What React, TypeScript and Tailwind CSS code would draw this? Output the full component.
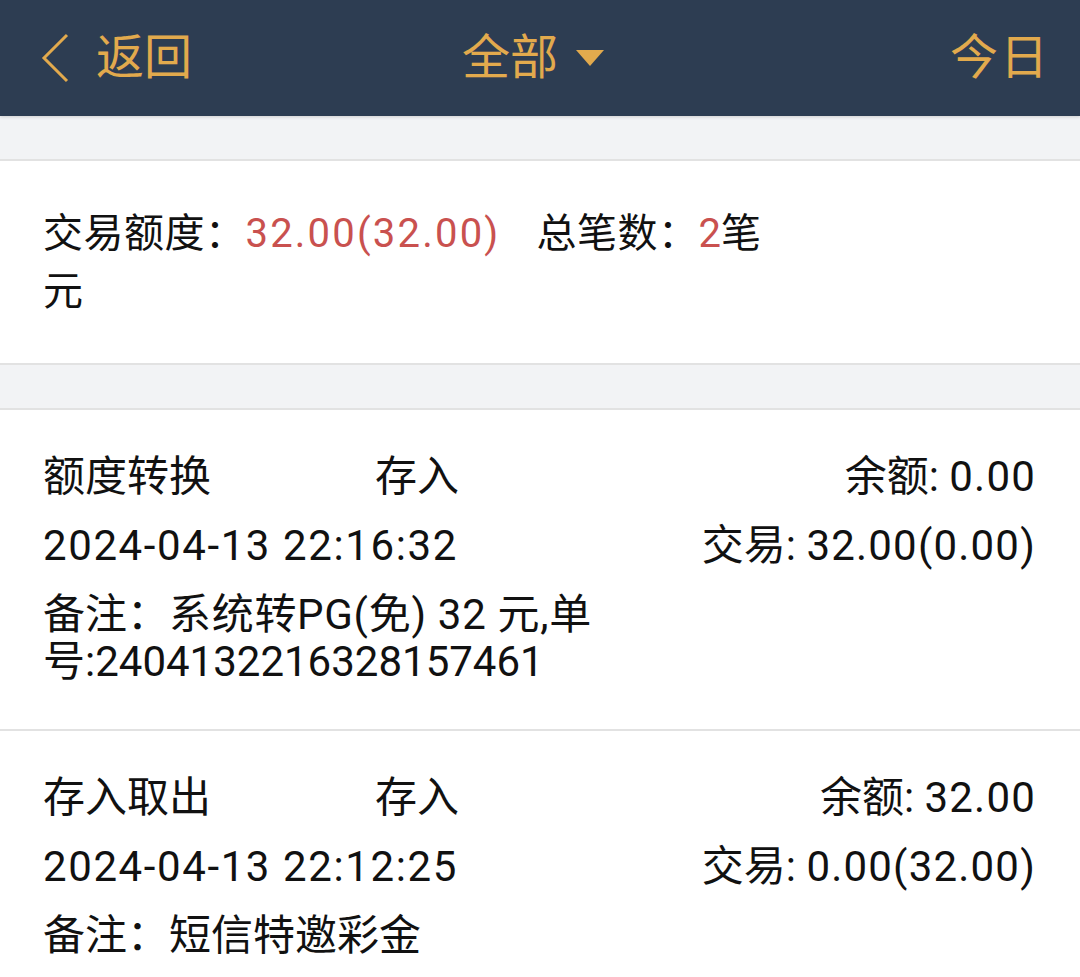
import React from "react";

const font = { fontFamily: 'Roboto, "Noto Sans CJK SC", sans-serif' };

function Record(props: {
  title: string;
  kind: string;
  balLabel: string;
  balance: string;
  date: string;
  trade: string;
  remark: React.ReactNode;
}) {
  return (
    <div className="bg-white border-b-2 border-[#e2e2e2] pt-[43px] pb-[44px] pl-[43px] pr-[44px] text-[42px] leading-[47px] text-[#111]">
      <div className="flex items-center">
        <span className="w-[332px]">{props.title}</span>
        <span>{props.kind}</span>
        <span className="ml-auto">
          {props.balLabel}
          <span className="tracking-[1.2px]">{props.balance}</span>
        </span>
      </div>
      <div className="flex items-center mt-[22px]">
        <span className="tracking-[1.6px]">{props.date}</span>
        <span className="ml-auto">
          交易:{" "}
          <span className="tracking-[1.2px]">{props.trade}</span>
        </span>
      </div>
      <div className="mt-[22px]">{props.remark}</div>
    </div>
  );
}

export default function App() {
  return (
    <div className="w-[1080px] h-[977px] overflow-hidden bg-[#f2f3f5]" style={font}>
      <div className="h-[116px] bg-[#2d3d52] flex items-center px-[40px] text-[#e2aa4d] text-[48px] relative shadow-[0_1px_3px_rgba(0,0,0,0.15)]">
        <div className="flex items-center">
          <svg width="30" height="52" viewBox="0 0 30 52" className="mr-[26px]">
            <path d="M27 3 L4 26 L27 49" fill="none" stroke="#e2aa4d" strokeWidth="3" />
          </svg>
          <span>返回</span>
        </div>
        <div className="absolute left-[462px] top-0 h-[116px] flex items-center">
          <span>全部</span>
          <svg width="28" height="18" viewBox="0 0 28 18" className="ml-[18px]">
            <path d="M0 1 L28 1 L14 17 Z" fill="#e2aa4d" />
          </svg>
        </div>
        <span className="ml-auto mr-[-10px] tracking-[2px]">今日</span>
      </div>

      <div className="h-[43px]" />
      <div className="bg-white border-y-2 border-[#e2e2e2] pt-[44px] pb-[42px] pl-[43px] text-[40px] leading-[58px] text-[#111]">
        <div>
          <span className="tracking-[0.5px]">交易额度：</span>
          <span className="text-[#c9514f] tracking-[2.2px]">32.00(32.00)</span>
          <span className="ml-[36px] tracking-[0.5px]">总笔数：</span>
          <span className="text-[#c9514f]">2</span>
          <span>笔</span>
        </div>
        <div>元</div>
      </div>
      <div className="h-[43px]" />
      <div className="border-t-2 border-[#e2e2e2]">
        <Record
          title="额度转换"
          kind="存入"
          balLabel="余额: "
          balance="0.00"
          date="2024-04-13 22:16:32"
          trade="32.00(0.00)"
          remark={
            <>
              <div>
                备注：<span className="tracking-[0.7px]">系统转PG(免) 32 元,单</span>
              </div>
              <div>号:2404132216328157461</div>
            </>
          }
        />
        <Record
          title="存入取出"
          kind="存入"
          balLabel="余额: "
          balance="32.00"
          date="2024-04-13 22:12:25"
          trade="0.00(32.00)"
          remark={<div>备注：短信特邀彩金</div>}
        />
      </div>
    </div>
  );
}
